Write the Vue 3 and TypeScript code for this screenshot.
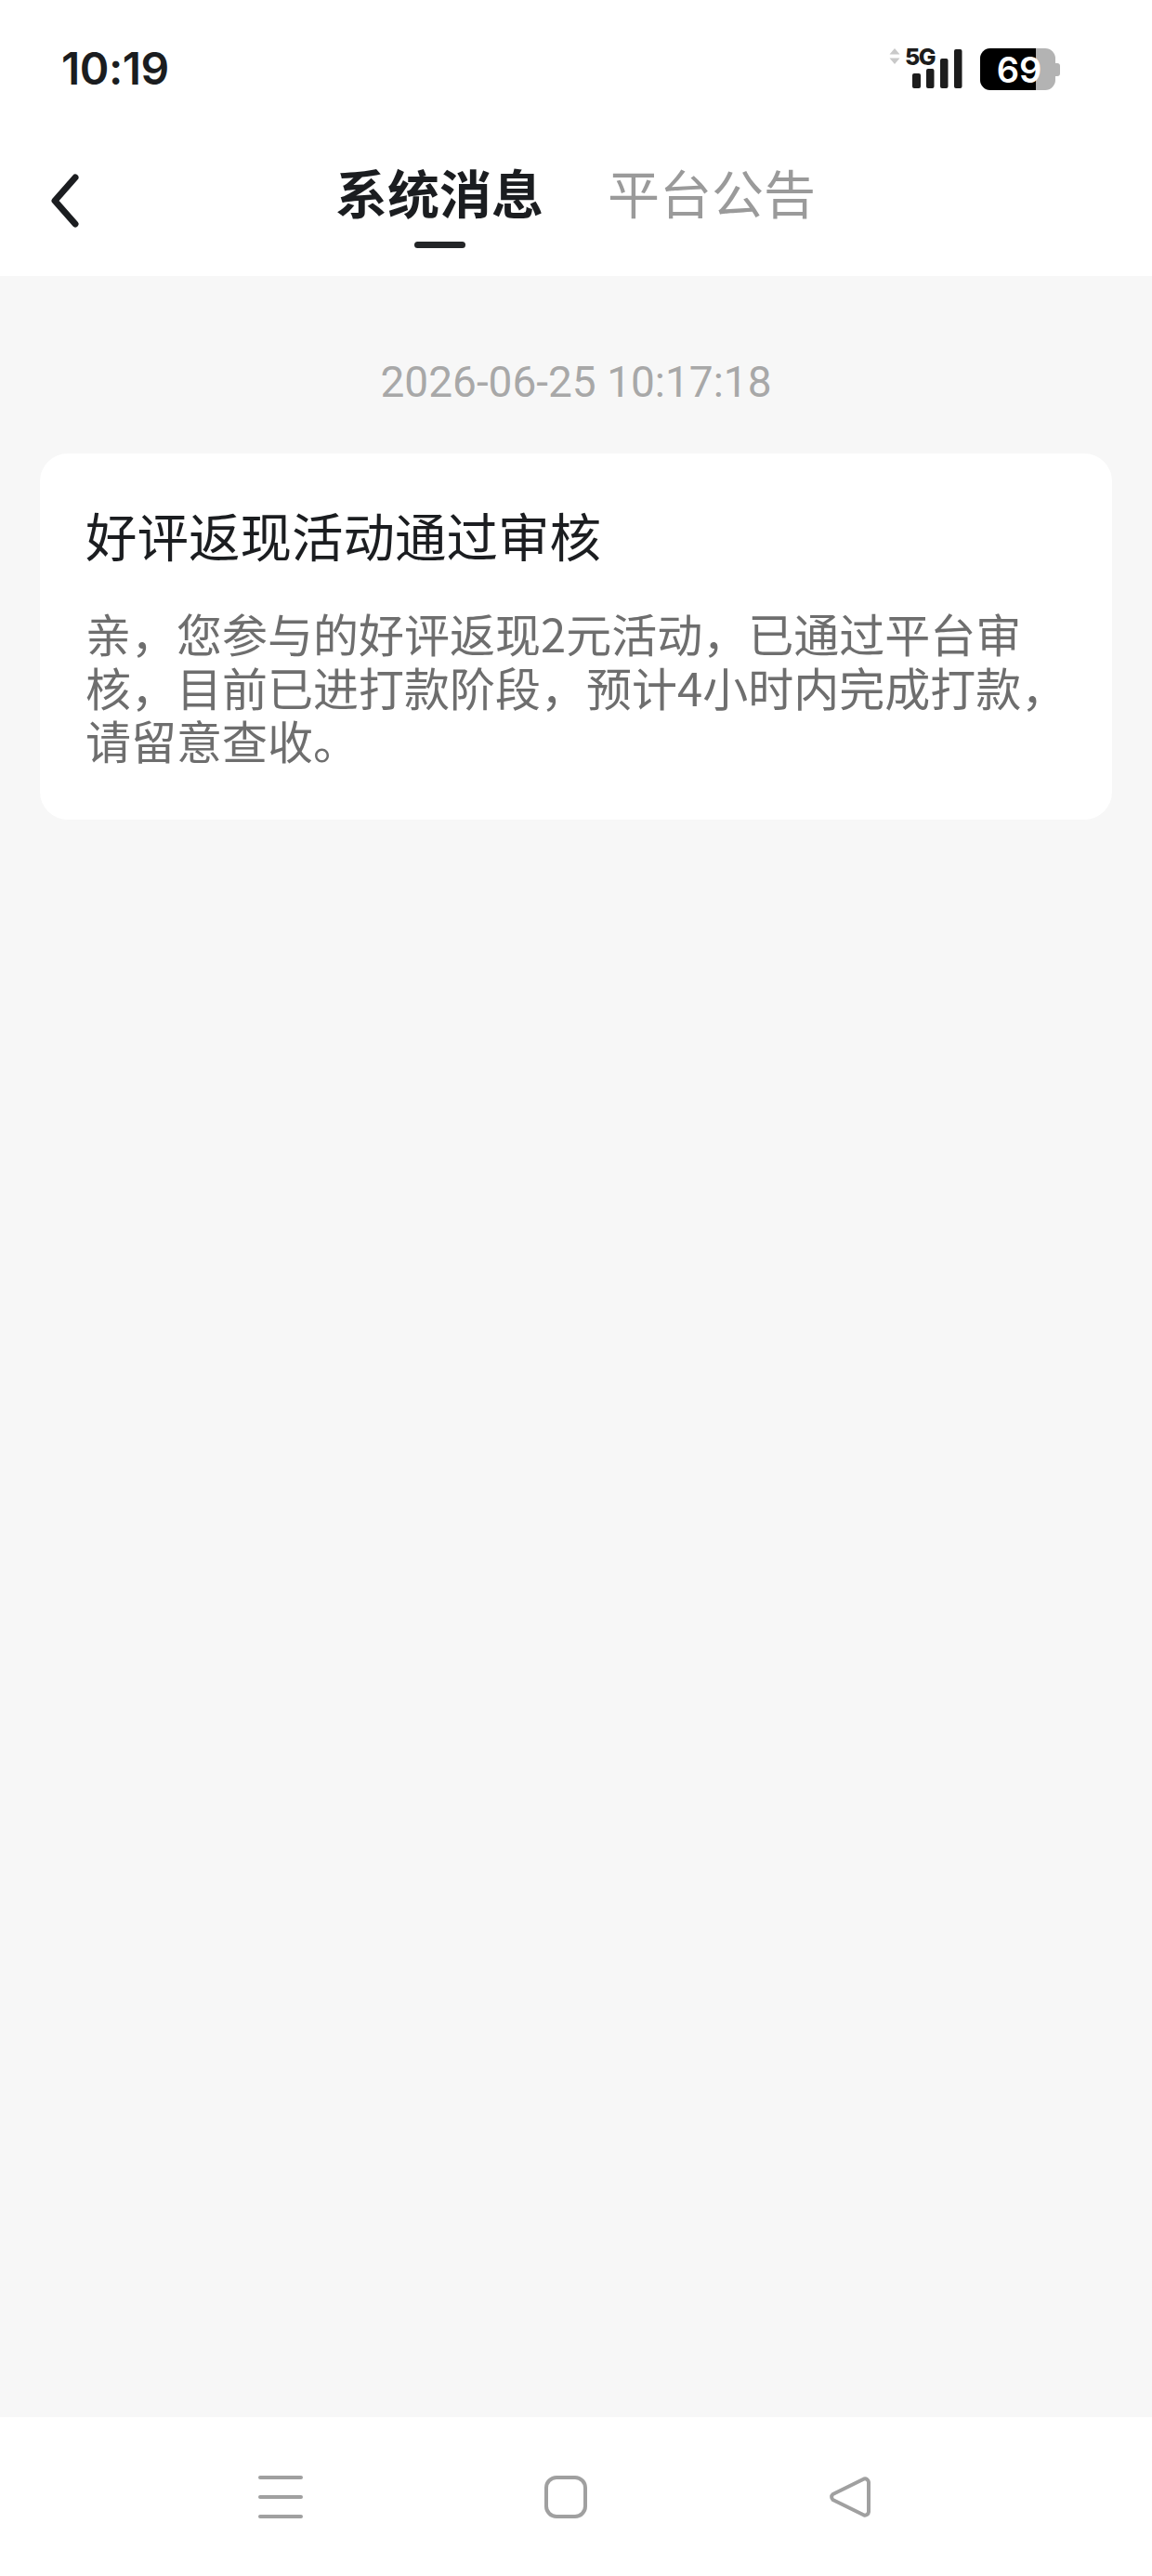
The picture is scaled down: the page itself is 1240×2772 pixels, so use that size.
<template>
  <div class="page">
    <div class="status-bar">
      <span class="time">10:19</span>
      <svg class="status-icons" width="190" height="68" viewBox="955 40 190 68">
        <path d="M964 52l5.5 6.5h-11zM964 69l5.500-6.500h-11z" fill="#c9c9c9" />
        <text x="975" y="70" class="net">5G</text>
        <rect x="983" y="79" width="9" height="16" rx="2" fill="#1c1c1c" />
        <rect x="998" y="74" width="8.5" height="21" rx="2" fill="#1c1c1c" />
        <rect x="1013" y="63" width="8.5" height="32" rx="2" fill="#1c1c1c" />
        <rect x="1028" y="53" width="8.5" height="42" rx="2" fill="#1c1c1c" />
        <clipPath id="batt">
          <rect x="1056" y="52" width="81" height="45" rx="11" />
        </clipPath>
        <g clip-path="url(#batt)">
          <rect x="1056" y="52" width="81" height="45" fill="#b3b3b3" />
          <rect x="1056" y="52" width="60" height="45" fill="#000" />
        </g>
        <path d="M1137 68h2a3 3 0 0 1 3 3v8a3 3 0 0 1-3 3h-2z" fill="#b3b3b3" />
        <text x="1098" y="89" class="level">69</text>
      </svg>
    </div>
    <header class="header">
      <svg class="back" width="30" height="58" viewBox="0 0 30 58">
        <path d="M26 4L4 29l22 25" fill="none" stroke="#1b1d20" stroke-width="7" stroke-linecap="round" stroke-linejoin="round" />
      </svg>
      <nav class="tabs">
        <div v-for="tab in tabs" :key="tab" class="tab" :class="{ active: tab === current }">
          <span>{{ tab }}</span>
          <i class="tab-line"></i>
        </div>
      </nav>
    </header>
    <main class="content">
      <div class="date">2026-06-25 10:17:18</div>
      <section class="card">
        <h2>好评返现活动通过审核</h2>
        <p>亲，您参与的好评返现2元活动，已通过平台审核，目前已进打款阶段，预计4小时内完成打款，请留意查收。</p>
      </section>
    </main>
    <footer class="nav-bar">
      <svg width="48" height="46" viewBox="0 0 48 46">
        <path d="M2 2h44M2 23h44M2 44h44" stroke="#a0a0a0" stroke-width="4" stroke-linecap="round" />
      </svg>
      <svg width="48" height="48" viewBox="0 0 48 48">
        <rect x="3" y="3" width="42" height="42" rx="11" fill="none" stroke="#a0a0a0" stroke-width="4" />
      </svg>
      <svg width="46" height="46" viewBox="0 0 46 46">
        <path d="M38 3.500a4 4 0 0 1 5 3.500v32a4 4 0 0 1-5 3.500L4.500 26a4 4 0 0 1 0-6z" fill="none" stroke="#a0a0a0" stroke-width="4" stroke-linejoin="round" />
      </svg>
    </footer>
  </div>
</template>

<script setup lang="ts">
import { ref } from "vue";

const tabs = ["系统消息", "平台公告"];
const current = ref("系统消息");
</script>

<style>
body {
  background: #fff;
}
</style>

<style scoped>
.page {
  width: 1240px;
  height: 2772px;
  display: flex;
  flex-direction: column;
  font-family: "Noto Sans CJK SC", sans-serif;
  background: #fff;
}

.status-bar {
  height: 146px;
  display: flex;
  flex-direction: row;
  align-items: center;
  justify-content: space-between;
  padding: 0 96px 0 66px;
  flex: none;
}

.time {
  font-family: Inter, sans-serif;
  font-size: 48px;
  font-weight: 600;
  letter-spacing: -0.5px;
  color: #1b1d20;
}

.status-icons {
  margin-top: 2px;
}

.net {
  font-family: Inter, sans-serif;
  font-size: 25px;
  font-weight: 800;
  letter-spacing: -1.5px;
  fill: #1c1c1c;
}

.level {
  font-family: Inter, sans-serif;
  font-size: 38px;
  font-weight: 600;
  text-anchor: middle;
  fill: #fff;
}

.header {
  height: 151px;
  flex: none;
  display: flex;
  flex-direction: row;
  padding-left: 55px;
}

.back {
  margin-top: 41px;
}

.tabs {
  display: flex;
  flex-direction: row;
  gap: 69px;
  margin-left: 276px;
}

.tab {
  display: flex;
  flex-direction: column;
  align-items: center;
  font-size: 56px;
  line-height: 70px;
  padding-top: 25px;
  color: #9a9a9a;
}

.tab-line {
  width: 55px;
  height: 7px;
  border-radius: 4px;
  margin-top: 19px;
  background: transparent;
}

.tab.active {
  font-weight: 700;
  color: #1b1d20;
}

.tab.active .tab-line {
  background: #232527;
}

.content {
  flex: 1;
  background: #f7f7f7;
  padding: 84px 43px 0;
}

.date {
  font-family: Roboto, sans-serif;
  font-size: 46px;
  line-height: 60px;
  text-align: center;
  color: #a8a8a8;
}

.card {
  margin-top: 47px;
  background: #fff;
  border-radius: 30px;
  padding: 52px 46px 57px 49px;
}

.card h2 {
  margin: 0;
  font-size: 55.5px;
  font-weight: 400;
  line-height: 70px;
  color: #1b1d20;
}

.card p {
  margin: 42px 0 0;
  font-size: 49px;
  line-height: 57.500px;
  color: #6e6e6e;
}

.nav-bar {
  height: 171px;
  flex: none;
  display: flex;
  flex-direction: row;
  align-items: center;
  justify-content: flex-start;
  gap: 259px;
  padding: 0 0 0 278px;
  background: #fff;
}
</style>
